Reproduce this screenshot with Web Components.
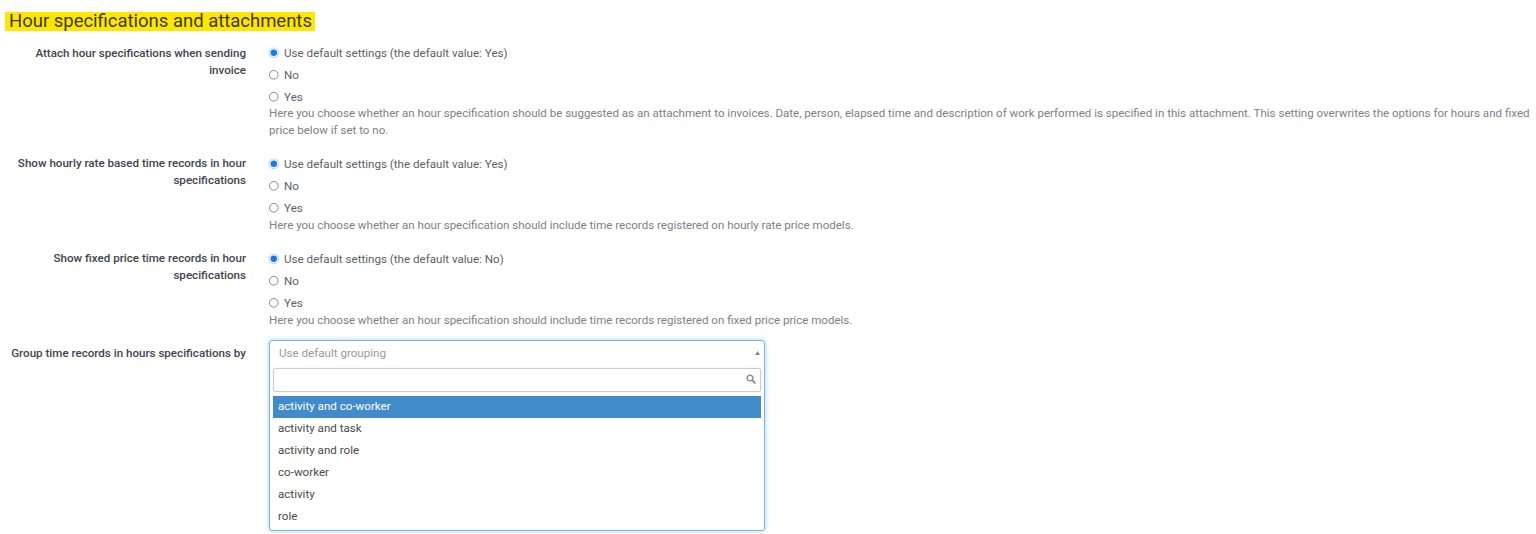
<!DOCTYPE html>
<html>
<head>
<meta charset="utf-8">
<title>Hour specifications and attachments</title>
<style>
html, body { margin: 0; background: #fff; height: 534px; overflow: hidden; }
body { font-family: Roboto, "Liberation Sans", sans-serif; }
</style>
</head>
<body>
<settings-page>
    <section-title>Hour specifications and attachments</section-title>

    <setting-row label="Attach hour specifications when sending invoice" style="height:111.5px; padding-top:.7px; --label-top:3px; --help-top:-.4px">
        <radio-group default-value="Yes"></radio-group>
        <help-text>Here you choose whether an hour specification should be suggested as an attachment to invoices. Date, person, elapsed time and description of work performed is specified in this attachment. This setting overwrites the options for hours and fixed price below if set to no.</help-text>
    </setting-row>

    <setting-row label="Show hourly rate based time records in hour specifications" style="height:95px">
        <radio-group default-value="Yes"></radio-group>
        <help-text>Here you choose whether an hour specification should include time records registered on hourly rate price models.</help-text>
    </setting-row>

    <setting-row label="Show fixed price time records in hour specifications" style="height:92.5px">
        <radio-group default-value="No"></radio-group>
        <help-text>Here you choose whether an hour specification should include time records registered on fixed price price models.</help-text>
    </setting-row>

    <setting-row label="Group time records in hours specifications by" select>
        <chosen-select placeholder="Use default grouping" options="activity and co-worker|activity and task|activity and role|co-worker|activity|role"></chosen-select>
    </setting-row>
</settings-page>

<script>
// Outer page wrapper
class SettingsPage extends HTMLElement {
    constructor() {
        super();
        this.attachShadow({ mode: 'open' });
        this.shadowRoot.innerHTML = `
            <style>
                :host {
                    display: block;
                    padding-top: 12px;
                    font-size: 11.6px;
                }
            </style>
            <slot></slot>
        `;
    }
}

// Heading with the yellow highlight behind it
class SectionTitle extends HTMLElement {
    constructor() {
        super();
        this.attachShadow({ mode: 'open' });
        this.shadowRoot.innerHTML = `
            <style>
                :host {
                    display: block;
                    margin: 0 0 10px 5px;
                }
                span {
                    display: inline-block;
                    background: #ffe600;
                    color: #3c3c28;
                    padding: 0 3px 0 4px;
                    font-size: 18.48px;
                    line-height: 19px;
                    height: 19px;
                }
            </style>
            <span><slot></slot></span>
        `;
    }
}

// Label column on the left, control column on the right
class SettingRow extends HTMLElement {
    constructor() {
        super();
        this.attachShadow({ mode: 'open' });
        this.shadowRoot.innerHTML = `
            <style>
                :host {
                    display: grid;
                    grid-template-columns: 246px 1fr;
                    column-gap: 23px;
                    box-sizing: border-box;
                }
                .label {
                    text-align: right;
                    font-size: 11.6px;
                    font-weight: 500;
                    line-height: 17px;
                    color: #3e4450;
                    padding-top: var(--label-top, 2.3px);
                }
                :host([select]) .label {
                    padding-top: 4.5px;
                }
            </style>
            <div class="label"></div>
            <div><slot></slot></div>
        `;
        this.shadowRoot.querySelector('.label').textContent = this.getAttribute('label');
    }
}

// The three radio choices of a setting
class RadioGroup extends HTMLElement {
    constructor() {
        super();
        this.attachShadow({ mode: 'open' });
        const value = this.getAttribute('default-value');
        const options = [`Use default settings (the default value: ${value})`, 'No', 'Yes'];
        this.shadowRoot.innerHTML = `
            <style>
                :host {
                    display: flex;
                    flex-direction: column;
                    gap: 6.2px;
                    padding-top: 3px;
                }
                .option {
                    display: flex;
                    align-items: center;
                    gap: 5.5px;
                    height: 16px;
                    font-size: 11.6px;
                    color: #5c6068;
                }
                svg {
                    width: 9.6px;
                    height: 9.6px;
                    flex: none;
                    overflow: visible;
                }
            </style>
            ${options.map((text, i) => `
                <div class="option">
                    <svg viewBox="0 0 10 10">
                        ${i === 0
                            ? '<circle cx="5" cy="5" r="5.6" fill="#bcd9f8"/><circle cx="5" cy="5" r="4.5" fill="#fff"/><circle cx="5" cy="5" r="3.4" fill="#1a78ee"/>'
                            : '<circle cx="5" cy="5" r="4.5" fill="#fff" stroke="#858585"/>'}
                    </svg>
                    <span>${text}</span>
                </div>
            `).join('')}
        `;
    }
}

class HelpText extends HTMLElement {
    constructor() {
        super();
        this.attachShadow({ mode: 'open' });
        this.shadowRoot.innerHTML = `
            <style>
                :host {
                    display: block;
                    font-size: 11.56px;
                    line-height: 17px;
                    color: #808080;
                    margin: var(--help-top, 1.2px) 4px 0 0;
                }
            </style>
            <slot></slot>
        `;
    }
}

// Open select box with search field and result list
class ChosenSelect extends HTMLElement {
    constructor() {
        super();
        this.attachShadow({ mode: 'open' });
        const options = this.getAttribute('options').split('|');
        this.shadowRoot.innerHTML = `
            <style>
                :host {
                    display: block;
                    width: 496px;
                    box-sizing: border-box;
                    border: 1px solid #7ab6ec;
                    border-radius: 3px;
                    box-shadow: 0 0 5px rgba(82, 168, 236, .55);
                    background: #fff;
                    font-size: 11.6px;
                    height: 191px;
                }
                .head {
                    display: flex;
                    justify-content: space-between;
                    align-items: center;
                    box-sizing: border-box;
                    height: 25px;
                    padding: 0 4px 2px 9px;
                    color: #999;
                }
                .head svg { width: 5px; height: 4px; }
                .search {
                    display: flex;
                    justify-content: flex-end;
                    align-items: center;
                    box-sizing: border-box;
                    height: 24px;
                    margin: 2px 3px 4px;
                    padding: 0 4px 3px 0;
                    border: 1px solid #ccc;
                    border-radius: 2px;
                    box-shadow: 0 0 2px rgba(0, 0, 0, .1);
                }
                .search svg { width: 10px; height: 10px; }
                ul {
                    list-style: none;
                    margin: 0 3px;
                    padding: 0;
                }
                li {
                    box-sizing: border-box;
                    height: 22px;
                    line-height: 20px;
                    padding-left: 5px;
                    color: #4a4a4a;
                }
                li.active {
                    background: #428bca;
                    color: #fff;
                }
            </style>
            <div class="head">
                <span>${this.getAttribute('placeholder')}</span>
                <svg viewBox="0 0 5 4"><path d="M2.5 0 5 4H0z" fill="#888"/></svg>
            </div>
            <div class="search">
                <svg viewBox="0 0 10 10"><circle cx="4" cy="4" r="2.9" fill="none" stroke="#888" stroke-width="1.4"/><path d="M6.2 6.2 9.4 9.4" stroke="#888" stroke-width="1.8"/></svg>
            </div>
            <ul>${options.map((o, i) => `<li class="${i === 0 ? 'active' : ''}">${o}</li>`).join('')}</ul>
        `;
    }
}

customElements.define('settings-page', SettingsPage);
customElements.define('section-title', SectionTitle);
customElements.define('setting-row', SettingRow);
customElements.define('radio-group', RadioGroup);
customElements.define('help-text', HelpText);
customElements.define('chosen-select', ChosenSelect);
</script>
</body>
</html>
